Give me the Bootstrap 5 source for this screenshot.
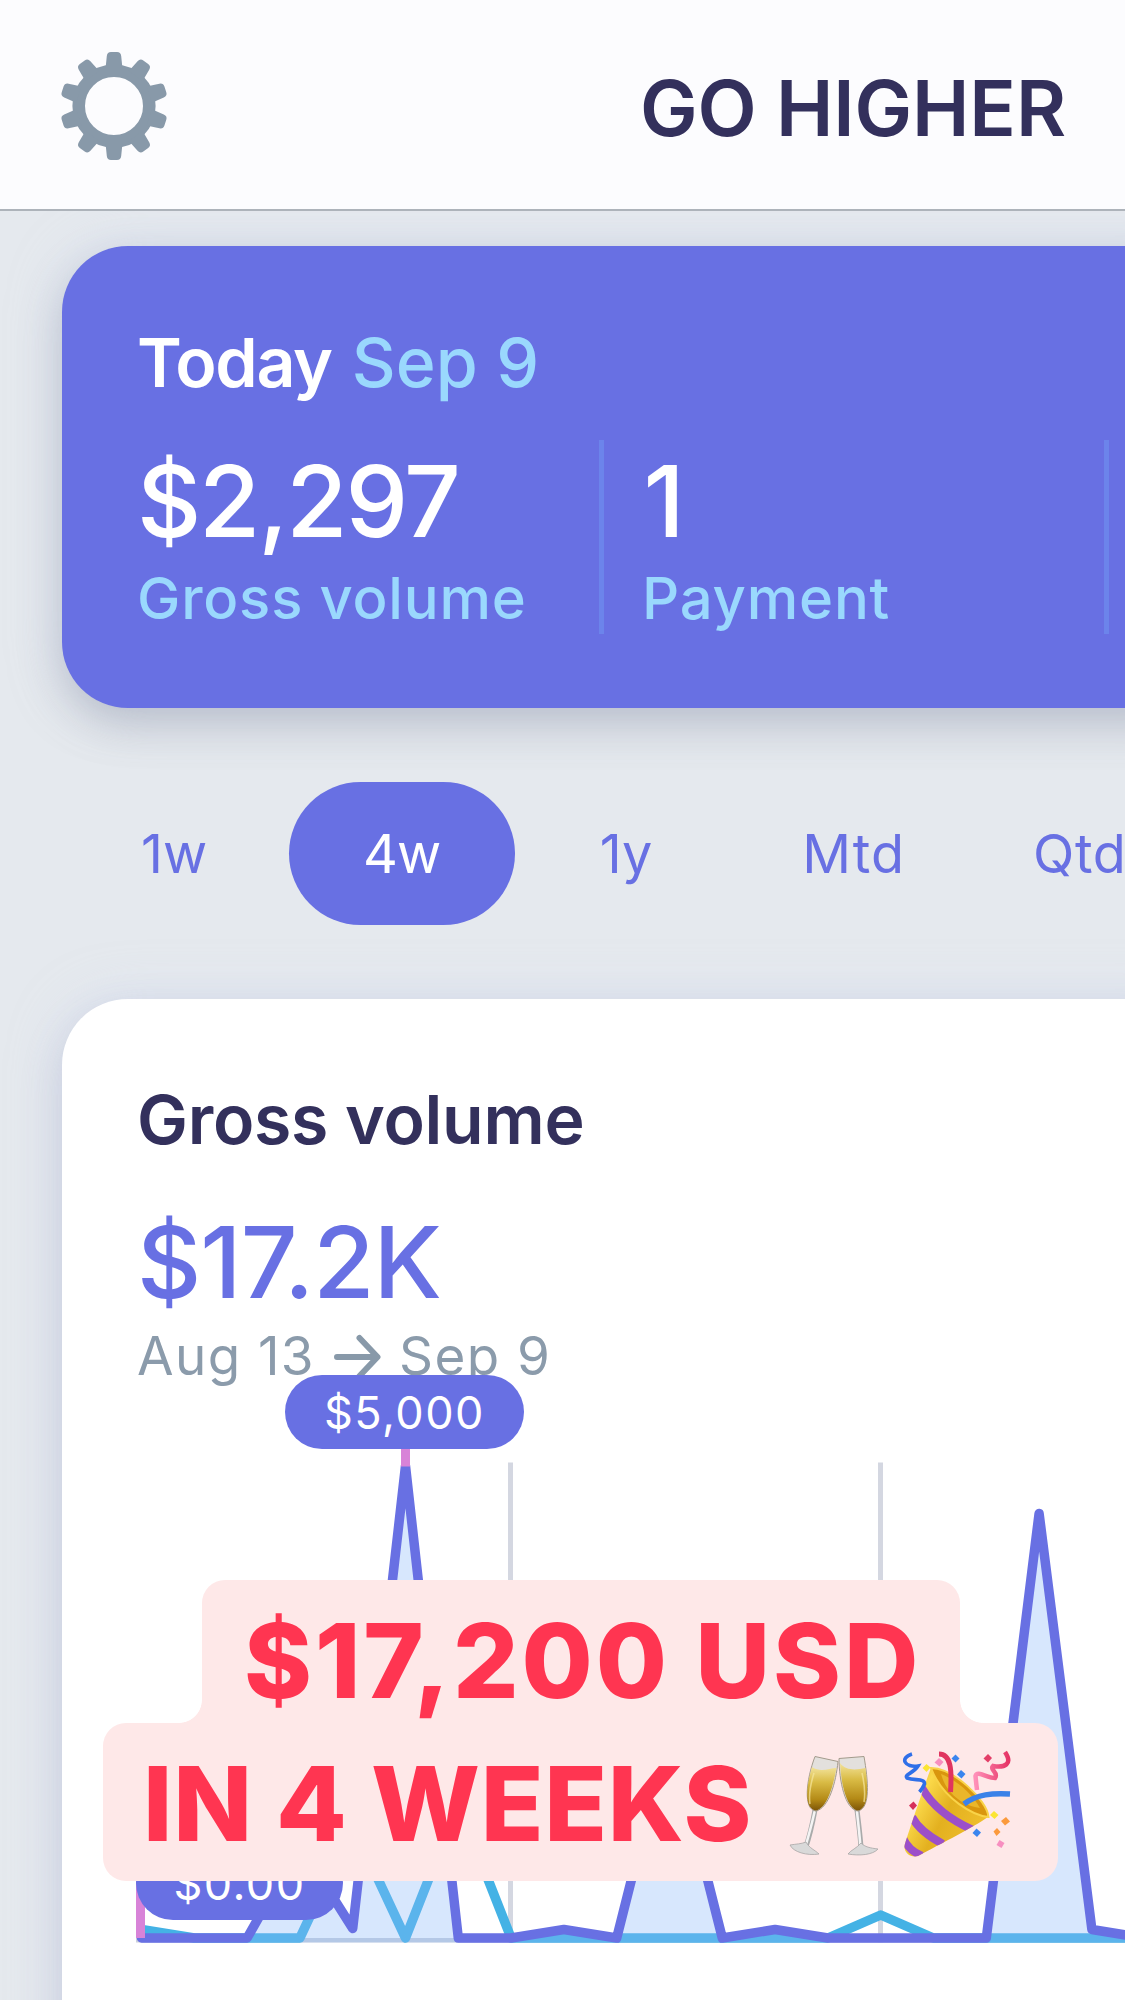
<!DOCTYPE html>
<html lang="en">
<head>
<meta charset="utf-8">
<meta name="viewport" content="width=device-width, initial-scale=1">
<title>Go Higher</title>
<link href="https://cdn.jsdelivr.net/npm/bootstrap@5.3.0/dist/css/bootstrap.min.css" rel="stylesheet">
<style>
  html, body { overflow: hidden; }
  body { font-family: Inter, "Liberation Sans", sans-serif; background: #e5e9ee; line-height: 1; color: #33305c; height: 2000px; }
  .t { line-height: 1; white-space: nowrap; display: block; }
  .topbar { height: 211px; padding: 49px 0 0 58px; background: #fcfcfe; border-bottom: 2px solid #adb3ba; position: relative; z-index: 1; }
  .app-name { font-size: 77px; font-weight: 600; letter-spacing: -.1px; margin: 20.5px 0 0 470px; }
  .panel { margin-left: 62px; margin-right: -50px; padding-left: 77px; border: 0; border-radius: 66px 0 0 66px; }
  .panel-today { margin-top: 35px; height: 462px; padding-top: 82px; background: #6870e3; color: #fff; box-shadow: 0 16px 44px rgba(75,80,105,.27), 0 0 50px rgba(215,225,250,.5); }
  .heading { font-size: 68px; font-weight: 600; letter-spacing: -.27px; }
  .heading-day { letter-spacing: -1.33px; margin-left: -2px; }
  .heading-date { font-weight: 500; letter-spacing: .1px; color: #9ad8fd; margin-left: 20px; }
  .stats { margin-top: 44px; height: 194px; }
  .stat { padding-top: 12px; }
  .stat + .stat { border-left: 5px solid #6c84eb; width: 505px; padding-left: 38px; flex: none; }
  .stat-last { flex: 1 1 0 !important; width: auto !important; padding-left: 0 !important; }
  .stat-first { width: 460px; flex: none; }
  .stat-value { font-size: 99.5px; font-weight: 500; }
  .stat-label { font-size: 58px; font-weight: 500; letter-spacing: .8px; color: #9ad8fd; margin-top: 17px; }
  .ranges { height: 143px; margin-top: 74px; padding-left: 66px; overflow: hidden; }
  .ranges .nav-link { font-size: 54px; line-height: 1; color: #6870e3; height: 143px; padding: 0 75px; border-radius: 72px; display: flex; align-items: center; white-space: nowrap; flex: none; }
  .ranges .nav-link.active { background: #6870e3; color: #fff; width: 226px; justify-content: center; padding: 0; letter-spacing: -1px; margin-left: 6.5px; }
  .panel-volume { height: 1100px; margin-top: 74px; padding-top: 86px; background: #fff; border-bottom-left-radius: 66px; box-shadow: 0 16px 44px rgba(75,80,120,.18), 0 0 50px rgba(215,225,250,.5); position: relative; color: #33305c; }
  .volume-total { font-size: 99.5px; font-weight: 500; letter-spacing: -.97px; color: #6870e3; margin-top: 60px; margin-left: -2px; }
  .period { font-size: 53px; letter-spacing: 1.4px; color: #8b9bab; margin: 17px 0 0 -2px; height: 53px; }
  .period svg { margin: 2px 18px 0 19px; flex: none; }
  .chart-wrap { overflow: hidden; margin: 55.5px 0 0 -3px; height: 504.5px; }
  .chart { display: block; }
  .bubble { position: absolute; height: 74px; border-radius: 37px; background: #6870e3; color: #fff; font-size: 45px; letter-spacing: 1.5px; line-height: 75px; text-align: center; white-space: nowrap; }
  .bubble-max { left: 223px; top: 375.5px; width: 239px; }
  .bubble-min { left: 74px; top: 847px; width: 207px; }
  .caption-tag { position: absolute; z-index: 3; left: 103px; top: 1580px; width: 955px; color: #ff3551; font-weight: 800; font-size: 103px; }
  .caption-top, .caption-bottom { background: #fee8e8; border-radius: 23px; }
  .caption-top { width: 758px; height: 165px; margin-left: 99px; padding: 29px 0 0 42px; letter-spacing: 2.89px; position: relative; border-radius: 23px 23px 0 0; }
  .caption-top::before, .caption-top::after { content: ""; position: absolute; top: 120px; width: 23px; height: 23px; }
  .caption-top::before { left: -23px; background: radial-gradient(circle at 0 0, transparent 22.5px, #fee8e8 23.2px); }
  .caption-top::after { right: -23px; background: radial-gradient(circle at 100% 0, transparent 22.5px, #fee8e8 23.2px); }
  .caption-bottom { height: 158px; margin-top: -22px; padding: 29px 0 0 40px; letter-spacing: .73px; }
</style>
<script src="https://cdn.jsdelivr.net/npm/bootstrap@5.3.0/dist/js/bootstrap.bundle.min.js"></script>
</head>
<body>

<header class="topbar d-flex align-items-start">
  <svg id="gear" width="112" height="114" viewBox="-56 -57 112 114" fill="#8899a9" class="flex-shrink-0">
    <defs><path id="tooth" d="M-8.5-37 L-7.2-50 Q-6.8-54-3-54 H3 Q6.8-54 7.2-50 L8.5-37Z"/></defs>
    <circle r="35.3" fill="none" stroke="#8899a9" stroke-width="12.6"/>
    <use href="#tooth"/><use href="#tooth" transform="rotate(36)"/><use href="#tooth" transform="rotate(72)"/><use href="#tooth" transform="rotate(108)"/><use href="#tooth" transform="rotate(144)"/><use href="#tooth" transform="rotate(180)"/><use href="#tooth" transform="rotate(216)"/><use href="#tooth" transform="rotate(252)"/><use href="#tooth" transform="rotate(288)"/><use href="#tooth" transform="rotate(324)"/>
  </svg>
  <h1 class="app-name t mb-0">GO HIGHER</h1>
</header>

<main class="overflow-visible">
<section class="panel panel-today">
  <div class="d-flex">
    <span class="t heading heading-day">Today</span>
    <span class="t heading heading-date">Sep 9</span>
  </div>
  <div class="stats d-flex">
    <div class="stat stat-first">
      <span class="t stat-value" style="letter-spacing:-2.16px;margin-left:-2px">$2,297</span>
      <span class="t stat-label" style="margin-left:-2px">Gross volume</span>
    </div>
    <div class="stat">
      <span class="t stat-value" style="margin-left:1.5px">1</span>
      <span class="t stat-label">Payment</span>
    </div>
    <div class="stat stat-last"></div>
  </div>
</section>

<nav class="ranges nav nav-pills flex-nowrap">
  <a class="nav-link">1w</a>
  <a class="nav-link active">4w</a>
  <a class="nav-link" style="padding-left:85px">1y</a>
  <a class="nav-link" style="letter-spacing:1px">Mtd</a>
  <a class="nav-link" style="padding:0 0 0 53px;letter-spacing:.6px">Qtd</a>
</nav>

<section class="panel panel-volume">
  <h2 class="t heading mb-0" style="margin-left:-2px">Gross volume</h2>
  <span class="t volume-total">$17.2K</span>
  <div class="period d-flex align-items-start">
    <span class="t">Aug 13</span>
    <svg width="47" height="50" viewBox="0 0 47 50" fill="none" stroke="#8899a9" stroke-width="6" stroke-linecap="round" stroke-linejoin="round"><path d="M3 25H43M25.5 6L43.500 25L25.500 44"/></svg>
    <span class="t">Sep 9</span>
  </div>

  <!-- day i sits at x = 5.500 + 52.800 * i, zero line at y = 490 -->
  <div class="chart-wrap">
  <svg class="chart" width="989" height="530" viewBox="0 -10 989 530" fill="none">
    <g fill="#d4d7e1">
      <rect x="372" y="14.500" width="5" height="480"/>
      <rect x="742" y="14.500" width="5" height="480"/>
    </g>
    <rect x="0" y="490" width="989" height="4.500" fill="#cbd0dc"/>
    <path d="M5.500 481.500L58.300 490H163.900L216.700 377L269.500 490L322.300 356L375.100 490H691.900L744.700 467L797.500 490H1000" stroke="#44b2e5" stroke-width="9.500" stroke-linejoin="round"/>
    <path d="M5.500 490H111.100L163.900 397L216.700 480.500L269.500 18L322.300 490H375.100L427.900 481.500L480.700 490L533.500 281L586.300 490L639.100 481.500L691.900 490H850.300L903.100 65.500L955.900 481.500L1008 490V494.500H5.500Z" fill="rgba(136,184,249,.337)"/>
    <path d="M5.500 490H111.100L163.900 397L216.700 480.500L269.500 18L322.300 490H375.100L427.900 481.500L480.700 490L533.500 281L586.300 490L639.100 481.500L691.900 490H850.300L903.100 65.500L955.900 481.500L1008 490" stroke="#6870e3" stroke-width="9.500" stroke-linejoin="round" stroke-linecap="round"/>
    <g fill="#d883d8">
      <rect x="0" y="420" width="9" height="70"/>
      <rect x="265" y="-10" width="9" height="28.500"/>
    </g>
  </svg>
  </div>

  <span class="bubble bubble-max">$5,000</span>
  <span class="bubble bubble-min">$0.00</span>
</section>
</main>

<div class="caption-tag">
  <div class="caption-top"><span class="t">$17,200 USD</span></div>
  <div class="caption-bottom d-flex position-relative">
    <span class="t">IN 4 WEEKS</span>
    <svg width="240" height="116" viewBox="780 1746 240 116" style="margin:-6px 0 0 29px" class="flex-shrink-0">
      <defs>
        <linearGradient id="wine" x1="0" y1="0" x2="0" y2="1"><stop offset="0" stop-color="#f3e39a"/><stop offset=".35" stop-color="#d9bb45"/><stop offset=".75" stop-color="#b48a16"/><stop offset="1" stop-color="#7d5508"/></linearGradient>
        <linearGradient id="gold" x1="0" y1="0" x2="1" y2=".6"><stop offset="0" stop-color="#c9930f"/><stop offset=".35" stop-color="#fbd94a"/><stop offset=".6" stop-color="#e3b01f"/><stop offset="1" stop-color="#f2c22f"/></linearGradient>
        <linearGradient id="pk" x1="0" y1="0" x2="1" y2="0"><stop offset="0" stop-color="#ff8fb8"/><stop offset="1" stop-color="#e63566"/></linearGradient>
        <clipPath id="cone"><path d="M930 1768C926 1778 906 1836 903.500 1846C903 1853 910 1858 917 1856C928 1850 975 1826 987 1817C990 1812 950 1768 930 1768Z"/></clipPath>
      </defs>
      <!-- clinking glasses -->
      <g stroke-linecap="round">
        <path d="M814 1810C811 1826 808 1838 804.500 1848" stroke="#a9aaaa" stroke-width="5" fill="none"/><path d="M813.500 1812C810 1828 807 1838 804 1848" stroke="#f4f4f4" stroke-width="2.500" fill="none"/>
        <path d="M856 1810C858 1826 859.500 1838 860 1848" stroke="#a9aaaa" stroke-width="5" fill="none"/><path d="M856 1812C857.500 1826 859 1838 859.500 1848" stroke="#f4f4f4" stroke-width="2.500" fill="none"/>
      </g>
      <path d="M789 1845C795 1844 800 1844 805 1842C808 1848 814 1850 818 1854C806 1856 792 1852 789 1845Z" fill="#d9d9d9" stroke="#a8a6a6" stroke-width=".8"/>
      <path d="M877 1849C869 1848 864 1847 860 1843C856 1848 850 1850 847 1854C858 1856 872 1855 877 1849Z" fill="#d9d9d9" stroke="#a8a6a6" stroke-width=".8"/>
      <path d="M814 1756.500L837 1761.500C835 1782 828 1808 815 1811C802 1810 805 1780 814 1756.500Z" fill="#e3e0dd" stroke="#a39b8c" stroke-width="1"/>
      <path d="M838 1758.500L863 1756.500C867 1780 870 1808 857 1811C844 1810 838 1780 838 1758.500Z" fill="#e3e0dd" stroke="#a39b8c" stroke-width="1"/>
      <path d="M811 1767C820 1773 828 1768 835.500 1768C832 1787 826 1808 815 1810.500C803 1809 805 1787 811 1767Z" fill="url(#wine)"/>
      <path d="M839 1763C845 1771 855 1770 864.500 1768C867 1787 868 1808 857 1810.500C846 1809 840 1785 839 1763Z" fill="url(#wine)"/>
      <path d="M813 1773Q807 1792 809 1804M861 1773Q865 1790 863 1802" stroke="#f6e7a0" stroke-width="1.600" fill="none" opacity=".7"/>
      <!-- party popper -->
      <g clip-path="url(#cone)">
        <rect x="895" y="1755" width="100" height="110" fill="url(#gold)"/>
        <g fill="none" stroke="#9c4fc9" stroke-width="8"><path d="M921 1788Q936 1814 972 1830"/><path d="M911 1817Q919 1832 942 1844"/><path d="M902 1838Q907 1850 921 1856"/></g>
      </g>
      <path d="M930 1768C952 1768 986 1800 987.500 1817C974 1816 942 1800 930 1768Z" fill="#d9960e" stroke="#f9d348" stroke-width="2"/>
      <path d="M940 1774C956 1780 972 1795 979 1808C964 1806 946 1796 940 1774Z" fill="#eab62a"/>
      <g fill="none">
        <path d="M938 1754C950 1754 951 1770 949.500 1792" stroke="#e0355f" stroke-width="5"/>
        <path d="M963 1804C976 1794 992 1793 1009 1794" stroke="#3b82e8" stroke-width="5.500"/>
        <path d="M911 1754C898 1758 904 1768 917 1766C912 1774 903 1774 906 1778C914 1781 924 1778 923.500 1784Q922 1788 918.500 1792" stroke="#2f6fe8" stroke-width="3.600"/>
        <path d="M1004 1752C1012 1764 1004 1768 992 1766C988 1770 998 1772 994 1778C986 1778 976 1770 974.500 1776Q975 1782 976 1790" stroke="url(#pk)" stroke-width="4.500"/>
      </g>
      <g>
        <path d="M954.500 1754.500l4 4-4 4-4-4z" fill="#3a85ee"/><path d="M960 1770l4.500 4-4 4.500-4.500-4z" fill="#3a85ee"/><path d="M975.500 1828.500l4.500 4-4 4.500-4.500-4z" fill="#3a85ee"/>
        <path d="M925.500 1764l4 3.500-4 4.500-4-4z" fill="#fbe532"/><path d="M993 1811l4.500 4-4 4-4.500-4z" fill="#fbe532"/>
        <path d="M938 1758l4.500 4-4 4.500-5-4z" fill="#f78fc0"/><path d="M998.500 1840l5 3-3 5-5-3z" fill="#f78fc0"/>
        <path d="M987 1754l4 4-4 4.500-4.500-4z" fill="#e33f68"/><path d="M912.500 1801.500l3.500 4-4 4.500-4-4.500z" fill="#d7305a"/>
        <path d="M1005 1817l4 4.500-5 4-4-4.500z" fill="#fb9a3c"/><path d="M996 1828l3.500 4-4 4-3-4.500z" fill="#fb9a3c"/>
      </g>
    </svg>
  </div>
</div>
</body>
</html>
